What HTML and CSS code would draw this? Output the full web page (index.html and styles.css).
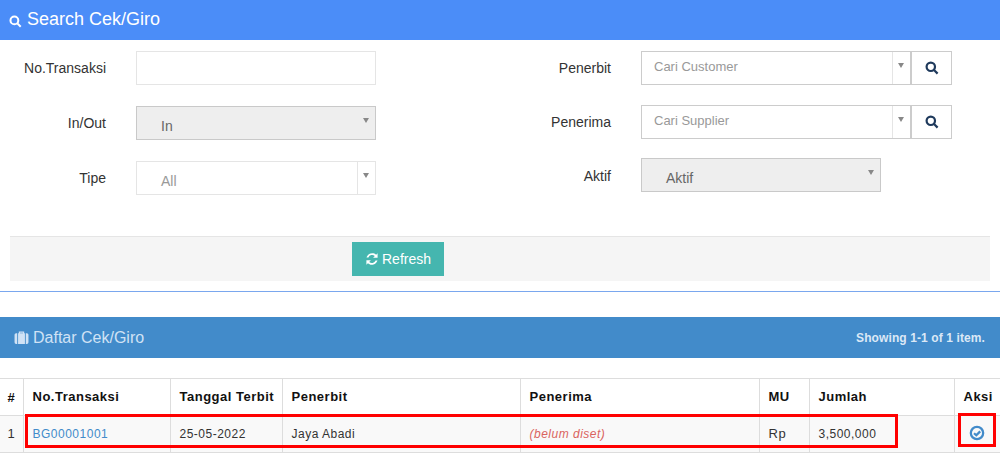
FILE: index.html

```html
<!DOCTYPE html>
<html lang="id">
<head>
  <meta charset="UTF-8">
  <meta name="viewport" content="width=device-width, initial-scale=1.0">
  <title>Cek/Giro</title>
  <link rel="stylesheet" href="styles.css">
</head>
<body>
<div class="search-title">
  <svg class="icon-search" viewBox="0 0 14 14"><circle cx="5.8" cy="5.8" r="4.2"/><path d="M9 9l3.6 3.6"/></svg>
  Search Cek/Giro
</div>

<div class="search-form">
  <div class="form-col">
    <div class="form-row row-a">
      <label>No.Transaksi</label>
      <input type="text" class="text-input">
    </div>
    <div class="form-row row-b">
      <label>In/Out</label>
      <div class="select disabled"><span>In</span><i class="caret"></i></div>
    </div>
    <div class="form-row row-c">
      <label>Tipe</label>
      <div class="select split"><span>All</span><i class="caret"></i></div>
    </div>
  </div>
  <div class="form-col">
    <div class="form-row row-d">
      <label>Penerbit</label>
      <div class="select2 split"><span>Cari Customer</span><i class="caret"></i></div>
      <button class="search-btn"><svg class="icon-search" viewBox="0 0 14 14"><circle cx="5.8" cy="5.8" r="4.2"/><path d="M9 9l3.6 3.6"/></svg></button>
    </div>
    <div class="form-row row-e">
      <label>Penerima</label>
      <div class="select2 split"><span>Cari Supplier</span><i class="caret"></i></div>
      <button class="search-btn"><svg class="icon-search" viewBox="0 0 14 14"><circle cx="5.8" cy="5.8" r="4.2"/><path d="M9 9l3.6 3.6"/></svg></button>
    </div>
    <div class="form-row row-f">
      <label>Aktif</label>
      <div class="select disabled"><span>Aktif</span><i class="caret"></i></div>
    </div>
  </div>
</div>

<div class="form-actions">
  <button class="refresh-btn">
    <svg class="icon-refresh" viewBox="0 0 14 14"><path d="M12.6 1.2v4.5H8.1l1.7-1.7A4 4 0 0 0 3.4 5.4H1.5A5.900 5.900 0 0 1 11.100 2.700z"/><path d="M1.400 12.800V8.300h4.500L4.200 10a4 4 0 0 0 6.400-1.400h1.900a5.900 5.900 0 0 1-9.600 2.700z"/></svg>
    Refresh
  </button>
</div>

<hr class="divider">

<div class="list-title">
  <div class="list-name">
    <svg class="icon-case" viewBox="0 0 14 14"><path d="M4.500 3V1.500h5V3h.7v10H3.800V3zM5.600 2.500V3h2.800v-.5zM.5 4.500A1.500 1.500 0 0 1 2 3h1v10H2A1.500 1.500 0 0 1 .5 11.500zM11 3h1a1.500 1.500 0 0 1 1.500 1.500v7A1.500 1.500 0 0 1 12 13h-1z"/></svg>
    Daftar Cek/Giro
  </div>
  <div class="summary">Showing <b>1-1</b> of <b>1</b> item.</div>
</div>

<div class="table-wrap">
  <table>
    <colgroup>
      <col class="c-num"><col class="c-no"><col class="c-date"><col class="c-from">
      <col class="c-to"><col class="c-mu"><col class="c-sum"><col class="c-act">
    </colgroup>
    <thead>
      <tr>
        <th>#</th><th>No.Transaksi</th><th>Tanggal Terbit</th><th>Penerbit</th>
        <th>Penerima</th><th>MU</th><th>Jumlah</th><th>Aksi</th>
      </tr>
    </thead>
    <tbody>
      <tr>
        <td class="big">1</td>
        <td><a href="#">BG00001001</a></td>
        <td>25-05-2022</td>
        <td>Jaya Abadi</td>
        <td class="not-set">(belum diset)</td>
        <td class="big">Rp</td>
        <td>3,500,000</td>
        <td class="act"><svg class="icon-check" viewBox="0 0 14 14"><circle cx="7" cy="7" r="5.4"/><path d="M4.400 7.200l2 1.800 3.400-3.400"/></svg></td>
      </tr>
    </tbody>
  </table>
  <div class="mark mark-row"></div>
  <div class="mark mark-act"></div>
</div>
</body>
</html>
```

FILE: styles.css

```css
* { box-sizing: border-box; }
body {
  margin: 0;
  background-color: #ffffff;
  color: #333333;
  font-family: "Liberation Sans", Arial, sans-serif;
  font-size: 14px;
  overflow: hidden;
}
.search-title {
  height: 40px;
  padding: 0 0 2px 9px;
  background-color: #4b8df8;
  color: #ffffff;
  font-size: 18px;
  display: flex;
  align-items: center;
  gap: 5px;
}
.search-title .icon-search { width: 13px; height: 13px; stroke: #ffffff; margin-top: 5px; }
.icon-search { fill: none; stroke: #1f3a5c; stroke-width: 2.2; }

.search-form {
  display: flex;
  height: 196px;
}
.form-col { width: 505px; padding-top: 11px; }
.form-col + .form-col { width: 495px; }
.form-row { display: flex; height: 34px; }
.form-row label { width: 106px; text-align: right; padding-top: 9px; flex-shrink: 0; }
.row-b, .row-c { margin-top: 21px; }
.row-e { margin-top: 20px; }
.row-f { margin-top: 19px; }
.row-f label { padding-top: 10px; }
.text-input {
  width: 240px;
  height: 34px;
  margin-left: 30px;
  border: 1px solid #e5e5e5;
  background-color: #ffffff;
}
.select, .select2 {
  position: relative;
  height: 34px;
  margin-left: 30px;
  width: 240px;
  border: 1px solid #e5e5e5;
  color: #999999;
  padding: 11px 0 0 24px;
}
.select.disabled {
  background-color: #eeeeee;
  border-color: #c9c9c9;
  color: #666666;
}
.select2 {
  width: 270px;
  padding: 7px 0 0 12px;
  font-size: 13px;
  border-color: #cccccc;
}
.split::after {
  content: "";
  position: absolute;
  top: 0;
  bottom: 0;
  right: 17px;
  border-left: 1px solid #e5e5e5;
}
.caret {
  position: absolute;
  right: 6px;
  top: 11px;
  border-left: 3px solid transparent;
  border-right: 3px solid transparent;
  border-top: 5px solid #888888;
}
.search-btn {
  width: 41px;
  height: 34px;
  padding: 0;
  background-color: #ffffff;
  border: 1px solid #cccccc;
  display: flex;
  align-items: center;
  justify-content: center;
}
.search-btn .icon-search { width: 14px; height: 14px; }

.form-actions {
  margin: 0 10px;
  height: 45px;
  padding: 5px 0 0 342px;
  background-color: #f5f5f5;
  border-top: 1px solid #e5e5e5;
}
.refresh-btn {
  width: 92px;
  height: 34px;
  padding: 0;
  border: none;
  background-color: #45b6af;
  color: #ffffff;
  font-family: inherit;
  font-size: 14px;
  display: flex;
  align-items: center;
  justify-content: center;
  gap: 3px;
}
.icon-refresh { width: 14px; height: 14px; fill: #ffffff; }

.divider {
  margin: 10px 0 25px;
  height: 1px;
  border: none;
  background-color: #7aa7ee;
}
.list-title {
  height: 41px;
  padding: 0 15px 0 14px;
  background-color: #428bca;
  display: flex;
  align-items: center;
  justify-content: space-between;
}
.list-name {
  color: #d0e2f5;
  font-size: 16px;
  display: flex;
  align-items: center;
  gap: 4px;
}
.icon-case { width: 15px; height: 15px; fill: #d0e2f5; }
.summary { color: #dbe8f6; font-size: 12px; font-weight: bold; letter-spacing: 0.1px; }
.summary b { font-weight: bold; }

.table-wrap { position: relative; margin-top: 20px; }
table {
  width: 1000px;
  table-layout: fixed;
  border-collapse: collapse;
  border-top: 1px solid #dddddd;
  font-size: 12px;
  letter-spacing: 0.5px;
}
.c-num { width: 23px; }
.c-no { width: 147px; }
.c-date { width: 112px; }
.c-from { width: 238px; }
.c-to { width: 239px; }
.c-mu { width: 50px; }
.c-sum { width: 145px; }
.c-act { width: 46px; }
th, td {
  border-left: 1px solid #dddddd;
  border-bottom: 1px solid #dddddd;
  padding: 0 8px 0 9px;
  text-align: left;
  white-space: nowrap;
}
th:first-child, td:first-child { border-left: none; text-align: center; padding: 0; }
th { height: 37px; padding-bottom: 2px; color: #111111; font-size: 13px; font-weight: bold; }
td { height: 37px; background-color: #f9f9f9; }
td.big { font-size: 13px; padding-bottom: 2px; }
a { color: #428bca; text-decoration: none; }
.not-set { color: #d9645f; font-style: italic; }
.act { text-align: center; padding: 0 0 2px; }
.icon-check { width: 16px; height: 16px; fill: none; stroke: #428bca; stroke-width: 2; vertical-align: middle; }

.mark { position: absolute; border: 3px solid #ff0000; }
.mark-row { left: 25px; top: 36px; width: 873px; height: 34px; }
.mark-act { left: 958px; top: 35px; width: 38px; height: 34px; }
```
